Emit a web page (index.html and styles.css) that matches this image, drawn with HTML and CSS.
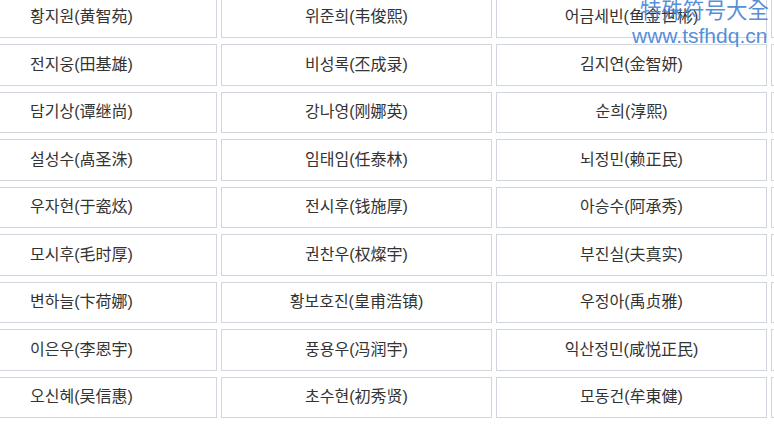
FILE: index.html
```html
<!DOCTYPE html>
<html lang="ko">
<head>
<meta charset="utf-8">
<title>韩国名字</title>
<link rel="stylesheet" href="styles.css">
</head>
<body>
<div class="page">
  <table class="names">
    <colgroup><col class="c"><col class="c"><col class="c"><col class="c"></colgroup>
    <tbody>
      <tr><td>황지원(黄智苑)</td><td>위준희(韦俊熙)</td><td>어금세빈(鱼金世彬)</td><td></td></tr>
      <tr><td>전지웅(田基雄)</td><td>비성록(丕成录)</td><td>김지연(金智妍)</td><td></td></tr>
      <tr><td>담기상(谭继尚)</td><td>강나영(刚娜英)</td><td>순희(淳熙)</td><td></td></tr>
      <tr><td>설성수(卨圣洙)</td><td>임태임(任泰林)</td><td>뇌정민(赖正民)</td><td></td></tr>
      <tr><td>우자현(于瓷炫)</td><td>전시후(钱施厚)</td><td>아승수(阿承秀)</td><td></td></tr>
      <tr><td>모시후(毛时厚)</td><td>권찬우(权燦宇)</td><td>부진실(夫真实)</td><td></td></tr>
      <tr><td>변하늘(卞荷娜)</td><td>황보호진(皇甫浩镇)</td><td>우정아(禹贞雅)</td><td></td></tr>
      <tr><td>이은우(李恩宇)</td><td>풍용우(冯润宇)</td><td>익산정민(咸悦正民)</td><td></td></tr>
      <tr><td>오신혜(吴信惠)</td><td>초수현(初秀贤)</td><td>모동건(牟東健)</td><td></td></tr>
    </tbody>
  </table>
  <div class="watermark">
    <div class="wm-title">特殊符号大全</div>
    <div class="wm-url">www.tsfhdq.cn</div>
  </div>
</div>
</body>
</html>
```
FILE: styles.css
```css
html, body {
  margin: 0;
  padding: 0;
  background: #fff;
  overflow: hidden;
}
.page {
  position: relative;
  width: 774px;
  height: 424px;
  overflow: hidden;
}
.names {
  border-collapse: separate;
  border-spacing: 4px 6px;
  table-layout: fixed;
  width: 1104px;
  margin-left: -58px;
  margin-top: -9.5px;
  font-family: "Liberation Sans", "Noto Sans CJK SC", "Noto Sans CJK KR", sans-serif;
  font-size: 16px;
  color: #333;
}
.names .c {
  width: 271px;
}
.names td {
  border: 1px solid #d1d6de;
  height: 39.5px;
  padding: 0;
  text-align: center;
  vertical-align: middle;
  line-height: 20px;
  white-space: nowrap;
}
.watermark {
  position: absolute;
  top: 0;
  left: 632px;
  color: rgba(66, 128, 212, 0.9);
  font-family: "Liberation Sans", "Noto Sans CJK SC", sans-serif;
  font-size: 21px;
}
.wm-title {
  line-height: 22px;
  padding-left: 8px;
  font-size: 21.5px;
}
.wm-url {
  line-height: 24px;
  margin-top: 2px;
}
```
